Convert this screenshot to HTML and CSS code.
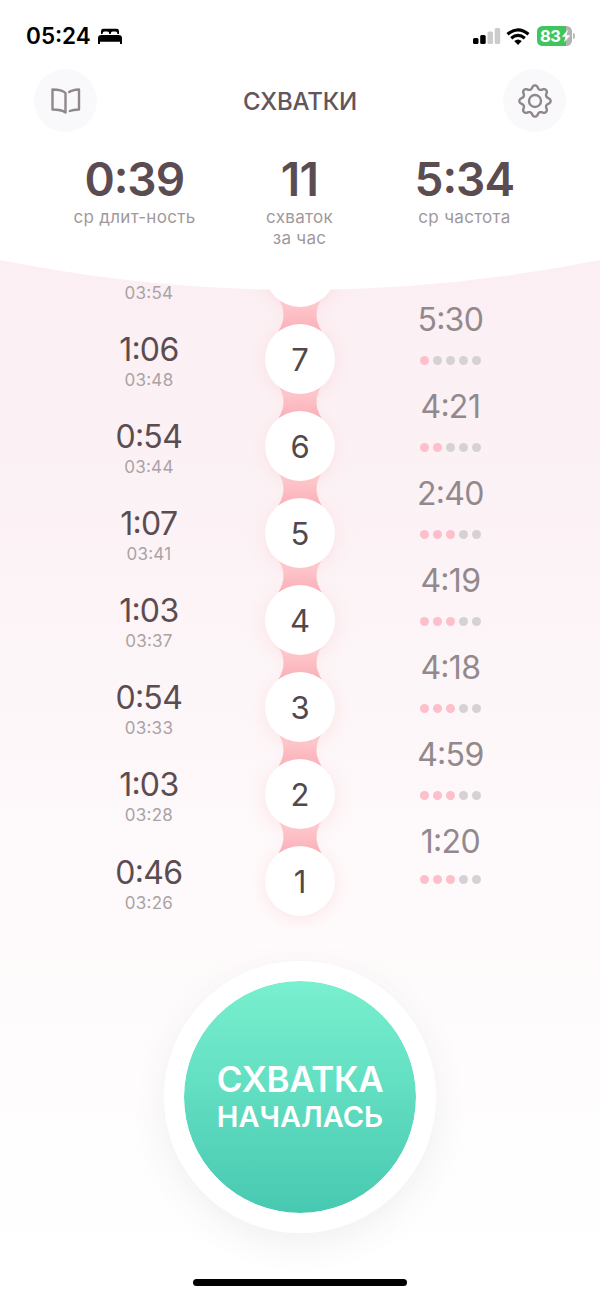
FILE: index.html
```
<!DOCTYPE html>
<html lang="ru">
<head>
<meta charset="utf-8">
<title>Схватки</title>
<link rel="stylesheet" href="styles.css">
</head>
<body>
<div class="screen">
  <header class="header">
    <svg class="header-curve" width="600" height="291" viewBox="0 0 600 291" aria-hidden="true"><path d="M0 0H600V260Q300 320 0 260Z" fill="#fff"/></svg>
    <div class="status">
      <span class="clock">05<span class="colon">:</span>24</span>
      <svg class="bed" width="24" height="17" viewBox="0 0 24 17"><path d="M3 6V3.2Q3 .8 5.4.8H18.600Q21 .8 21 3.200V6H19.500Q19.300 3.600 17.500 3.600H14.700Q12.900 3.600 12.700 6H11.300Q11.100 3.600 9.300 3.600H6.500Q4.700 3.600 4.500 6Z"/><path d="M3.500 7H20.500Q24 7 24 10V16H22V13.800H2V16H0V10Q0 7 3.500 7Z"/></svg>
      <div class="status-right">
        <svg width="28" height="18" viewBox="0 0 28 18"><rect x="0" y="11" width="5.500" height="6" rx="1.500"/><rect x="7.200" y="8" width="5.500" height="9" rx="1.500"/><g fill="#ccc"><rect x="14.500" y="4.500" width="5.500" height="12.500" rx="1.500"/><rect x="21.700" y="1" width="5.500" height="16" rx="1.500"/></g></svg>
        <svg class="wifi" width="24" height="17" viewBox="0 0 24 17"><g fill="none" stroke="#000" stroke-width="3.200"><path d="M1.500 6.200Q12-2.600 22.500 6.200"/><path d="M5.200 10.200Q12 4.400 18.800 10.200"/></g><path d="M8.200 13.100Q12 9.800 15.800 13.100L12 17Z"/></svg>
        <span class="battery"><span class="battery-level">83</span><svg width="10" height="14" viewBox="0 0 10 14"><path d="M7 .5.8 7.800H4.500L3 13.500 9.400 6.200H5.600Z" fill="#fff"/></svg></span>
        <span class="battery-tip"></span>
      </div>
    </div>
    <nav class="nav">
      <span class="round"><svg width="30" height="28" viewBox="0 0 30 28"><g fill="none" stroke="#8f888b" stroke-width="2.400" stroke-linejoin="round" stroke-linecap="round"><path d="M14.500 25.500V6Q11 2.500 1.500 2.500V22.500Q10.500 22.500 14.500 25.500"/><path d="M18.200 5Q21 3 28 2.500V22.500Q22 22.600 18.800 24"/></g></svg></span>
      <h1 class="title">СХВАТКИ</h1>
      <span class="round"><svg width="36" height="36" viewBox="-18 -18 36 36"><g fill="none" stroke="#8f888b" stroke-width="2.400" stroke-linejoin="round"><circle r="6"/><path id="gear" d=""/></g></svg></span>
    </nav>
    <div class="stats">
      <div class="stat"><b>0<i class="colon">:</i>39</b><span>ср длит-ность</span></div>
      <div class="stat"><b>11</b><span>схваток<br>за час</span></div>
      <div class="stat"><b>5<i class="colon">:</i>34</b><span>ср частота</span></div>
    </div>
  </header>
  <main class="history" id="history"></main>
  <button class="start"><span class="start-big">СХВАТКА</span><span class="start-small">НАЧАЛАСЬ</span></button>
  <div class="home"></div>
</div>
<script src="app.js"></script>
</body>
</html>
```
FILE: styles.css
```
* { box-sizing: border-box; }
body { margin: 0; font-family: Inter, "Noto Sans", sans-serif; }
.screen {
  width: 600px; height: 1297px; overflow: hidden;
  display: flex; flex-direction: column; align-items: center;
  background: linear-gradient(#fbeff3 260px, #fcf3f6 550px, #fefafb 900px, #fff 1270px);
}
.header { position: relative; z-index: 2; width: 600px; height: 290px; flex: none; }
.header-curve { position: absolute; left: 0; top: 0; z-index: -1; }
.colon { font-style: normal; line-height: 0; vertical-align: .075em; margin: 0 -.01em; }
.status { height: 69px; padding: 3px 25px 0 26px; display: flex; align-items: center; }
.clock { margin-top: -1px; font-size: 22.5px; font-weight: 600; letter-spacing: .1px; }
.bed { margin-left: 7px; }
.status-right { margin-left: auto; display: flex; align-items: center; }
.wifi { margin: 0 7px 0 5px; }
.battery {
  width: 35px; height: 20px; border-radius: 5.500px; display: flex; align-items: center; padding-left: 3px;
  background: linear-gradient(90deg, #3ec55c 29px, #b3b3b3 29px);
}
.battery-level { color: #fff; font-size: 16.5px; font-weight: 700; line-height: 20px; letter-spacing: -.4px; }
.battery-tip { width: 2px; height: 6px; margin-left: 1px; border-radius: 0 2px 2px 0; background: #bbb; }
.nav { height: 63px; padding: 0 34px; display: flex; align-items: center; justify-content: space-between; }
.round { width: 63px; height: 63px; border-radius: 50%; background: #f9f9fc; display: flex; align-items: center; justify-content: center; }
.title { margin: 2px 0 0; font-size: 24px; font-weight: 450; color: #62565a; letter-spacing: -.2px; }
.stats { display: grid; grid-template-columns: repeat(3, 165px); justify-content: center; padding: 20px 1px 0 0; }
.stat { display: flex; flex-direction: column; align-items: center; text-align: center; }
.stat b { font-size: 46px; line-height: 54px; font-weight: 600; color: #5b4c51; letter-spacing: -.7px; }
.stat span { margin-top: 1px; font-size: 17px; line-height: 20.500px; color: #9f999c; letter-spacing: .3px; }
.history { margin-top: -62px; flex: none; }
.row { height: 87px; display: grid; grid-template-columns: repeat(3, 150px); column-gap: 1px; }
.duration, .interval { display: flex; flex-direction: column; align-items: center; }
.duration { padding-top: 15px; }
.time { height: 40px; line-height: 39px; font-size: 32px; color: #5b4c51; letter-spacing: -.5px; }
.begin { line-height: 20px; font-size: 17px; color: #aaa3a6; letter-spacing: .35px; }
.interval { padding-right: 1px; }
.interval .time { color: #93898d; margin-top: -15px; }
.dots { display: flex; gap: 4px; margin-top: 16px; }
.dots i { width: 9px; height: 9px; border-radius: 50%; background: #d6d1d5; }
.dots .on { background: #fdbfca; }
.row:last-child .dots { margin-top: 13px; }
.row:last-child .duration { padding-top: 16px; }
.node { position: relative; display: flex; align-items: center; justify-content: center; }
.circle {
  position: relative; z-index: 1; width: 70px; height: 70px; border-radius: 50%; background: #fff; padding-top: 2px;
  display: flex; align-items: center; justify-content: center; font-size: 31px; color: #51484b;
  box-shadow: 0 3px 18px rgba(253, 185, 185, .3);
}
.link { position: absolute; left: 50px; top: 71px; }
.start {
  margin: 37px 0 0; width: 272px; height: 272px; flex: none; padding: 0; border: 20px solid #fff; border-radius: 50%;
  background: linear-gradient(#79f0cf, #47c9b1) padding-box; box-shadow: 0 10px 35px rgba(80, 70, 75, .08);
  display: flex; flex-direction: column; align-items: center; justify-content: center;
  font-family: inherit; font-weight: 600; color: #fff;
}
.start-big { font-size: 35px; line-height: 40px; letter-spacing: -.4px; }
.start-small { font-size: 29px; line-height: 36px; }
.home { margin-top: 46px; width: 214px; height: 7px; border-radius: 4px; background: #000; flex: none; }
```
FILE: app.js
```
const rows = [
  [8, '', '03:54', '', 0],
  [7, '1:06', '03:48', '5:30', 1],
  [6, '0:54', '03:44', '4:21', 2],
  [5, '1:07', '03:41', '2:40', 3],
  [4, '1:03', '03:37', '4:19', 3],
  [3, '0:54', '03:33', '4:18', 3],
  [2, '1:03', '03:28', '4:59', 3],
  [1, '0:46', '03:26', '1:20', 3]
];
const clock = t => t.replace(':', '<span class="colon">:</span>');
const link = `<svg class="link" width="50" height="32" viewBox="0 0 50 32"><defs><linearGradient id="pink" x2="0" y2="1"><stop offset=".2" stop-color="#fec9ce"/><stop offset="1" stop-color="#fbb0b9"/></linearGradient></defs><path d="M3.500 0Q13.500 16 3.500 32H46.500Q36.500 16 46.500 0Z" fill="url(#pink)"/></svg>`;
document.getElementById('history').innerHTML = rows.map(([n, time, begin, gap, on]) => `
  <div class="row">
    <div class="duration"><span class="time">${clock(time)}</span><span class="begin">${clock(begin)}</span></div>
    <div class="node"><span class="circle">${n === 8 ? '' : n}</span>${n > 1 ? link : ''}</div>
    <div class="interval">${gap ? `<span class="time">${clock(gap)}</span><span class="dots">${[1, 2, 3, 4, 5].map(i => `<i class="${i <= on ? 'on' : ''}"></i>`).join('')}</span>` : ''}</div>
  </div>`).join('');

// Eight rounded teeth around the settings wheel
let d = '';
for (let i = 0; i <= 160; i++) {
  const a = i / 160 * Math.PI * 2;
  const c = Math.cos(8 * a);
  const r = 13.9 + 1.7 * Math.sign(c) * Math.pow(Math.abs(c), .7);
  d += (i ? 'L' : 'M') + (r * Math.cos(a)).toFixed(2) + ' ' + (r * Math.sin(a)).toFixed(2);
}
document.getElementById('gear').setAttribute('d', d + 'Z');
```
